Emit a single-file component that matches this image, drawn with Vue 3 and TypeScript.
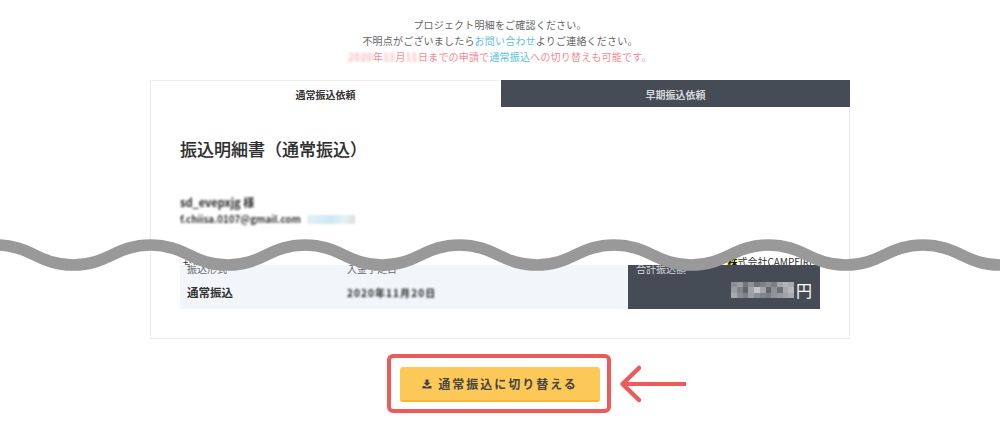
<template>
  <div class="page">
    <div class="intro">
      <p>プロジェクト明細をご確認ください。</p>
      <p>不明点がございましたら<span class="link">お問い合わせ</span>よりご連絡ください。</p>
      <p class="notice">
        <span class="blur">2020</span>年<span class="blur">11</span>月<span class="blur">11</span>日までの申請で<span class="link">通常振込</span>への切り替えも可能です。
      </p>
    </div>

    <div class="card">
      <div class="tabs">
        <div class="tab active">通常振込依頼</div>
        <div class="tab">早期振込依頼</div>
      </div>
      <div class="card-body">
        <h1 class="title">振込明細書（通常振込）</h1>
        <div class="name blur-soft">sd_evepxjg 様</div>
        <div class="email">
          <span class="blur-soft">f.chiisa.0107@gmail.com</span>
          <span class="email-tag"></span>
        </div>

        <div class="cut-row">
          <span class="cut-label">お振込先</span>
          <span class="cut-company"><mark>株</mark>式会社CAMPFIRE</span>
        </div>
        <div class="summary">
          <div class="summary-main">
            <div class="col col-type">
              <div class="label">振込形式</div>
              <div class="type">通常振込</div>
            </div>
            <div class="col col-date">
              <div class="label">入金予定日</div>
              <div class="date blur-soft">2020年11月20日</div>
            </div>
          </div>
          <div class="summary-total">
            <div class="label">合計振込額</div>
            <div class="amount">
              <span class="mosaic">
                <i v-for="(c, i) in mosaic" :key="i" :style="{ background: c }"></i>
              </span>
              <span>円</span>
            </div>
          </div>
        </div>
      </div>
    </div>

    <div class="action">
      <div class="highlight">
        <button class="switch-btn" type="button">
          <svg width="10" height="10" viewBox="0 0 10 10">
            <path d="M3.500 0.500h3v3.200h2L5 7 1.500 3.700h2z" fill="#444" />
            <path d="M0.500 7h2.300L5 8.300 7.200 7h2.300v2.600h-9z" fill="#444" />
          </svg>
          通常振込に切り替える
        </button>
        <svg class="arrow" width="70" height="40" viewBox="0 0 70 40">
          <path d="M67 20H5" stroke="#ec5a5a" stroke-width="4" fill="none" />
          <path d="M20 4L3.500 20L20 36" stroke="#ec5a5a" stroke-width="4.500" stroke-linecap="round" stroke-linejoin="round" fill="none" />
        </svg>
      </div>
    </div>

    <svg class="wave" width="1000" height="40" viewBox="0 0 1000 40">
      <path :d="wavePath" stroke="#999" stroke-width="11.500" fill="none" />
    </svg>
  </div>
</template>

<script setup lang="ts">
import { computed } from 'vue'

const period = 154.5
const firstCrest = -4
const top = 10
const bottom = 30

// crests and troughs joined by horizontal-tangent curves
const wavePath = computed(() => {
  const half = period / 2
  const handle = half * 0.45
  let d = `M${firstCrest - period} ${top}`
  for (let i = -1; i < 8; i++) {
    const x = firstCrest + i * period
    d += ` C${x + handle} ${top} ${x + half - handle} ${bottom} ${x + half} ${bottom}`
    d += ` C${x + half + handle} ${bottom} ${x + period - handle} ${top} ${x + period} ${top}`
  }
  return d
})

const mosaic = [
  '#8a8f96', '#9a9ea4', '#70767e', '#8f9399', '#6e747c', '#7d8289', '#8b9096', '#7a8087', '#a2a6ab', '#b0b3b7', '#a8abb0',
  '#9a9ea3', '#7f848b', '#5f666f', '#a0a3a8', '#c3c5c8', '#a2a5aa', '#60676f', '#8d9197', '#6c727a', '#a6a9ae', '#b6b8bc',
  '#a6a9ad', '#8b9096', '#7d8289', '#9ba0a4', '#8a8f95', '#81868d', '#7b8087', '#8f9399', '#969a9f', '#a0a3a8', '#a9acb0',
]
</script>

<style>
body {
  background: #fff;
}
</style>

<style scoped>
.page {
  position: relative;
  width: 1000px;
  height: 446px;
  overflow: hidden;
  font-family: "Noto Sans CJK JP", "Noto Sans", sans-serif;
  color: #444;
}

.intro {
  padding-top: 17px;
  text-align: center;
  font-size: 10px;
  letter-spacing: 0.2px;
  line-height: 16px;
  color: #666;
}

.intro p {
  margin: 0;
}

.link {
  color: #5bbfe3;
}

.notice {
  color: #f58a92;
}

.blur {
  display: inline-block;
  filter: blur(1.400px);
  letter-spacing: 0.600px;
}

.blur-soft {
  filter: blur(1.300px);
}

.card {
  width: 700px;
  height: 259px;
  margin: 15px auto 0;
  box-sizing: border-box;
  border: 1px solid #ececec;
  border-top: 0;
}

.tabs {
  display: flex;
  height: 27px;
  margin-right: -1px;
}

.tab {
  flex: 1;
  display: flex;
  align-items: center;
  justify-content: center;
  font-size: 10px;
  font-weight: 700;
  background: #454c56;
  color: #d5d8db;
  border-top: 1px solid #454c56;
}

.tab.active {
  background: #fff;
  color: #333;
  border-top: 1px solid #ececec;
  border-right: 1px solid #fff;
}

.card-body {
  padding: 30px 29px 0;
}

.title {
  margin: 0;
  font-size: 17px;
  font-weight: 500;
  line-height: 24px;
  color: #2e2e2e;
  -webkit-text-stroke: 0.15px #2e2e2e;
}

.name {
  margin-top: 33px;
  font-size: 11px;
  font-weight: 700;
  line-height: 16px;
  color: #222;
  width: fit-content;
}

.email {
  display: flex;
  align-items: center;
  gap: 6px;
  margin-top: 2px;
  font-size: 9.800px;
  font-weight: 700;
  line-height: 14px;
  color: #333;
}

.email-tag {
  width: 48px;
  height: 9px;
  background: linear-gradient(90deg, #e4f1f7, #cbe7f3 50%, #e8f1f5 80%, #d8dde0);
  filter: blur(1px);
}

.cut-row {
  display: flex;
  justify-content: space-between;
  height: 12px;
  margin-top: 27px;
  padding: 0 5px 0 2px;
  overflow: hidden;
  font-size: 10px;
  line-height: 18px;
  color: #333;
}

.cut-label {
  margin-top: 3px;
}

.cut-company mark {
  background: #fffb5c;
  color: #111;
  font-weight: 700;
}

.summary {
  display: flex;
  height: 44px;
  overflow: hidden;
}

.summary-main {
  flex: 1;
  display: flex;
  background: #f2f6fa;
  padding-left: 7px;
}

.col-type {
  width: 160px;
}

.label {
  font-size: 10px;
  line-height: 7px;
  color: #666;
}

.type {
  margin-top: 10px;
  font-size: 11.500px;
  font-weight: 700;
  line-height: 20px;
  color: #333;
}

.date {
  margin-top: 13px;
  font-size: 10px;
  font-weight: 700;
  letter-spacing: 1.100px;
  line-height: 16px;
  color: #222;
}

.summary-total {
  width: 192px;
  padding: 0 8px;
  box-sizing: border-box;
  background: #454c56;
}

.summary-total .label {
  color: #d8dadd;
}

.amount {
  display: flex;
  justify-content: flex-end;
  align-items: center;
  gap: 2px;
  margin-top: 6px;
  font-size: 16px;
  line-height: 24px;
  color: #fff;
}

.mosaic {
  display: grid;
  grid-template-columns: repeat(11, 5.700px);
  grid-auto-rows: 5.400px;
}

.action {
  display: flex;
  justify-content: center;
  margin-top: 15px;
  padding-right: 2px;
}

.highlight {
  position: relative;
  padding: 9px 7px 7px 9px;
  border: 4px solid #ec5a5a;
  border-radius: 6px;
}

.switch-btn {
  display: flex;
  align-items: center;
  justify-content: center;
  gap: 6px;
  width: 200px;
  height: 35px;
  padding: 0;
  border: 0;
  border-bottom: 2px solid #f8b62d;
  border-radius: 3px;
  background: #fcc857;
  font-family: inherit;
  font-size: 12px;
  font-weight: 700;
  letter-spacing: 2px;
  color: #444;
}

.arrow {
  position: absolute;
  left: 228px;
  top: 6px;
}

.wave {
  position: absolute;
  left: 0;
  top: 235px;
}
</style>
